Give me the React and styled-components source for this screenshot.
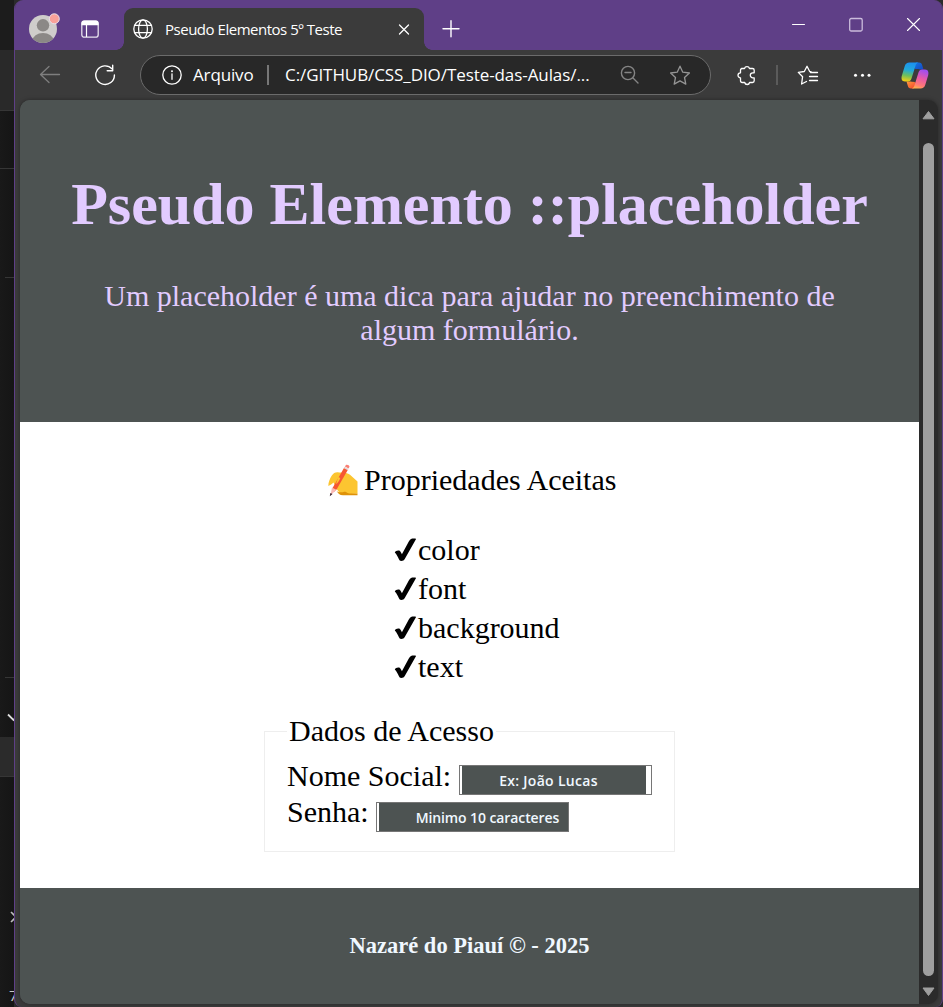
import React from "react";
import styled, { createGlobalStyle } from "styled-components";

const GlobalStyle = createGlobalStyle`
  * { box-sizing: border-box; }
  body { margin: 0; background: #191919; overflow: hidden; }
`;

const Desktop = styled.div`
  display: flex;
  width: 943px;
  height: 1007px;
  background: #2b2b2b;
  overflow: hidden;
`;

const Editor = styled.aside`
  width: 14px;
  flex: none;
  display: flex;
  flex-direction: column;
  background: linear-gradient(90deg, #191919, #151515);
  color: #c8c8c8;
  font: 15px "Open Sans", sans-serif;
  overflow: hidden;
`;

const EditorBlock = styled.div`
  height: ${(p) => p.$h}px;
  flex: none;
  margin-left: ${(p) => p.$inset || 0}px;
  background: ${(p) => p.$bg || "transparent"};
  border-bottom: ${(p) => (p.$line ? "1px solid #363636" : "0")};
  padding-left: ${(p) => p.$pad || 0}px;
  line-height: ${(p) => p.$h}px;
  svg { display: block; }
`;

const Window = styled.div`
  width: 929px;
  flex: none;
  display: flex;
  flex-direction: column;
  background: #3b3b3b;
  border: solid #5f3f87;
  border-width: 0 1px 0 1px;
  border-radius: 9px 9px 8px 8px;
  overflow: hidden;
  font-family: "Open Sans", sans-serif;
`;

const TitleBar = styled.div`
  height: 50px;
  flex: none;
  display: flex;
  background: #5f3f87;
`;

const TitleLeft = styled.div`
  width: 109px;
  display: flex;
  padding: 13px 0 0 13px;
  gap: 21px;
  svg { display: block; flex: none; }
`;

const Tab = styled.div`
  width: 300px;
  height: 42px;
  margin-top: 8px;
  display: flex;
  align-items: center;
  padding: 0 14px 0 9px;
  background: #3b3b3b;
  border-radius: 9px 9px 0 0;
  position: relative;
  &::before, &::after {
    content: "";
    position: absolute;
    bottom: 0;
    width: 8px;
    height: 8px;
  }
  &::before { left: -8px; background: radial-gradient(circle at 0 0, transparent 7.5px, #3b3b3b 8px); }
  &::after { right: -8px; background: radial-gradient(circle at 100% 0, transparent 7.5px, #3b3b3b 8px); }
  svg { display: block; flex: none; }
`;

const TabTitle = styled.span`
  flex: 1;
  margin-left: 12px;
  font-size: 15px;
  line-height: 20px;
  letter-spacing: -0.48px;
  color: #fff;
  white-space: nowrap;
`;

const NewTab = styled.div`
  padding: 20px 0 0 18px;
  flex: 1;
  svg { display: block; }
`;

const WindowControls = styled.div`
  display: flex;
  gap: 43px;
  padding: 17px 21px 0 0;
  svg { display: block; }
`;

const Toolbar = styled.div`
  height: 50px;
  flex: none;
  display: flex;
  align-items: center;
  padding-left: 24px;
  svg { display: block; flex: none; }
`;

const AddressBar = styled.div`
  width: 571px;
  height: 40px;
  margin-left: 24px;
  padding: 0 18px 0 21px;
  display: flex;
  align-items: center;
  background: #282828;
  border: 1px solid #6b6b6b;
  border-radius: 20px;
  color: #fff;
  font-size: 17px;
  line-height: 22px;
  white-space: nowrap;
`;

const Scheme = styled.span`
  width: 60px;
  flex: none;
  margin-left: 11px;
  letter-spacing: -0.15px;
`;

const Url = styled.span`
  width: 304px;
  flex: none;
  margin-left: 16px;
  letter-spacing: -0.08px;
`;

const Divider = styled.span`
  width: 2px;
  flex: none;
  height: 20px;
  margin-left: ${(p) => p.$left}px;
  background: ${(p) => p.$color};
`;

const Gap = styled.span`
  width: ${(p) => p.$w}px;
  flex: none;
`;

const Viewport = styled.div`
  width: 918px;
  height: 904px;
  margin-left: 5px;
  display: flex;
  border-radius: 10px;
  overflow: hidden;
  background: #2b2b2b;
  box-shadow: 0 0 4px rgba(0, 0, 0, 0.35);
`;

const Page = styled.div`
  width: 899px;
  display: flex;
  flex-direction: column;
  background: #4d5352;
  font-family: "Liberation Serif", serif;
  font-size: 30px;
  color: #000;
  white-space: nowrap;
`;

const Header = styled.header`
  height: 322px;
  padding-top: 69px;
  background: #4d5352;
  color: #e2cbff;
  text-align: center;
`;

const Heading = styled.h1`
  margin: 0;
  font-size: 60px;
  line-height: 70px;
`;

const Subtitle = styled.p`
  margin: 40px 0 0;
  line-height: 34px;
`;

const Main = styled.main`
  height: 466px;
  padding-top: 41px;
  background: #fff;
`;

const SectionTitle = styled.p`
  margin: 0 0 33px 307px;
  display: flex;
  line-height: 34px;
  svg { display: block; margin-right: 5px; }
`;

const PropertyList = styled.ul`
  margin: 0 0 28px 374px;
  padding: 0;
  list-style: none;
`;

const Property = styled.li`
  display: flex;
  line-height: 39px;
  svg { display: block; margin: 8px 1px 0 0; }
`;

const AccessForm = styled.fieldset`
  width: 411px;
  height: 138px;
  margin: 0 0 0 244px;
  padding: 0 0 0 22px;
  border: 1px solid #eee;
`;

const Legend = styled.legend`
  height: 34px;
  padding: 0 2px;
  line-height: 34px;
`;

const Field = styled.label`
  display: flex;
  height: 36px;
  line-height: 36px;
  &:first-of-type { margin-top: 10px; }
`;

const FakeInput = styled.span`
  width: 193px;
  height: 30px;
  margin: ${(p) => p.$top}px 0 0 ${(p) => p.$left}px;
  padding: 1px ${(p) => p.$right}px 1px 2px;
  display: block;
  border: 1px solid #767676;
  background: #fff;
`;

const Placeholder = styled.span`
  display: block;
  height: 28px;
  margin: -1px 0;
  padding-left: 37px;
  background: #4d5352;
  color: #f0f8ff;
  font: 600 14px/${(p) => p.$line}px "Open Sans", sans-serif;
  letter-spacing: ${(p) => p.$track}px;
`;

const Footer = styled.footer`
  height: 116px;
  padding-top: 44px;
  background: #4d5352;
  color: #f0f8ff;
  text-align: center;
  font-size: 22.5px;
  font-weight: bold;
  line-height: 28px;
`;

const ScrollTrack = styled.div`
  width: 19px;
  display: flex;
  flex-direction: column;
  justify-content: space-between;
  padding: 10px 0 6px 3px;
  svg { display: block; }
`;

const ScrollThumb = styled.div`
  width: 11px;
  height: 833px;
  margin: 13px 0 0 1px;
  border-radius: 6px;
  background: #9f9f9f;
`;

const Stroke = ({ w, h, color = "#fff", sw = 1.3, children }) => (
  <svg width={w} height={h} viewBox={`0 0 ${w} ${h}`} fill="none" stroke={color} strokeWidth={sw} strokeLinecap="round" strokeLinejoin="round">
    {children}
  </svg>
);

const Avatar = () => (
  <svg width="32" height="32" viewBox="0 0 32 32">
    <clipPath id="face"><circle cx="15" cy="16" r="14" /></clipPath>
    <circle cx="15" cy="16" r="14" fill="#cfcdcb" />
    <g clipPath="url(#face)" fill="#8b8886">
      <circle cx="15" cy="12.3" r="6.2" />
      <ellipse cx="15" cy="27.5" rx="10.5" ry="7.6" />
    </g>
    <circle cx="26.3" cy="5.8" r="5" fill="#f8a199" stroke="#e6dfea" strokeWidth="1" />
  </svg>
);

const Copilot = () => (
  <svg width="28" height="27" viewBox="0 0 28 27">
    <defs>
      <linearGradient id="cpA" x1="0.5" y1="0" x2="0.35" y2="1">
        <stop offset="0" stopColor="#1b90f0" /><stop offset="0.4" stopColor="#22a9d8" />
        <stop offset="0.7" stopColor="#6fbf5c" /><stop offset="1" stopColor="#f5cf12" />
      </linearGradient>
      <linearGradient id="cpB" x1="0.6" y1="0" x2="0.3" y2="1">
        <stop offset="0" stopColor="#a04df0" /><stop offset="0.45" stopColor="#e95aa6" />
        <stop offset="0.8" stopColor="#ff7a76" /><stop offset="1" stopColor="#ffb04c" />
      </linearGradient>
      <linearGradient id="cpC" x1="0" y1="0" x2="1" y2="1">
        <stop offset="0" stopColor="#1476e0" /><stop offset="1" stopColor="#1548c4" />
      </linearGradient>
      <linearGradient id="cpD" x1="0" y1="0" x2="1" y2="1">
        <stop offset="0" stopColor="#ff9c3c" /><stop offset="1" stopColor="#f0402f" />
      </linearGradient>
    </defs>
    <path d="M15 .5h3c2 0 2.700 1 3.200 2.700l1.300 4.300H19c-1.700 0-2.500-.6-4-.3L13 6Z" fill="url(#cpC)" />
    <path d="M13 26.500h-3c-2 0-2.700-1-3.200-2.700L5.500 19.500H9c1.700 0 2.500.6 4 .3L15 21Z" fill="url(#cpD)" />
    <path d="M8.500.5h8.800c-1.500.4-2.200 1.600-2.800 3.300L10.600 16.300c-.8 2.300-1.800 3.200-3.800 3.200H4C.7 19.500 0 16.500.9 13.500L3.700 4.200C4.500 1.700 6 .5 8.500.5Z" fill="url(#cpA)" />
    <path d="M19.500 26.500h-8.800c1.500-.4 2.200-1.600 2.800-3.300l3.900-12.500c.8-2.300 1.800-3.200 3.800-3.200H24c3.300 0 4 3 3.100 6l-2.800 9.300c-.8 2.500-2.300 3.700-4.800 3.700Z" fill="url(#cpB)" />
  </svg>
);

const WritingHand = () => (
  <svg width="32" height="34" viewBox="0 0 32 34">
    <path d="M12 9.500c-3-.8-5.500.5-7.200 3C2.700 15.800 1.300 19.500 1.300 23c2-.8 3.800-2 5.200-3.500L9 25l4 5.500 5 1 12.500-1V18.500l-7.500-6.700c-2.200-1.600-6-2.500-11-2.300Z" fill="#fcc531" />
    <path d="M9.500 27.500c1.500 2.300 3.500 1.700 5.500 1.800 1.500 0 2.500-1.200 4-.3 1.500 1.100 3 1.500 5 1.500h6.500v1.800H17c-4 .4-6-1.400-7.500-4.800Z" fill="#df9208" />
    <path d="m17.400 4.200 3.800 2.100L9.700 26.300l-3 3L5 26Z" fill="#f65632" />
    <path d="m17.900 3.600 1-1.700c1.500-.7 3.400.4 3.600 1.800l-1 1.900Z" fill="#fa8075" />
    <path d="m16.900 5.200 3.900 2.100.7-1.500-3.900-2.100Z" fill="#e4dcdc" />
    <path d="m5 24.500 4.300 2.200-5.900 5.800Z" fill="#f9b9b4" />
    <path d="m3.400 30 2.100.9-2.700 2.400Z" fill="#3b2530" />
    <path d="M13.300 15c-1.200 2.900-2.200 4.600-4.300 6l2.300-7Z" fill="#fcc531" />
  </svg>
);

const Check = () => (
  <svg width="23" height="26" viewBox="0 0 23 26">
    <path d="M.8 14.500c.4-1.600 2.900-2.500 4.400-1.900 1.100.5 2 2.100 2.700 3.700L14.800 3.500C16.200 1 17.500.5 20 .5c1.800 0 2.400.1 1.800 1L10.900 20.700c-.8 1.500-2 2.200-3.600 2.200-1.400 0-1.900-.5-2.500-1.800C3.700 18.500 2.800 16.700.8 14.500Z" fill="#000" />
  </svg>
);

const properties = ["color", "font", "background", "text"];

export default function App() {
  return (
    <Desktop>
      <GlobalStyle />
      <Editor>
        <EditorBlock $h={50} $bg="#1c1c1c" />
        <EditorBlock $h={61} $bg="#292929" $line />
        <EditorBlock $h={58} $line />
        <EditorBlock $h={109} $line $inset={5} />
        <EditorBlock $h={400} $line $inset={5} />
        <EditorBlock $h={59} $pad={7}>
          <svg width="12" height="48" viewBox="0 0 12 48" fill="none" stroke="#ddd" strokeWidth="1.8"><path d="m1 36.500 5.500 5.500 5-5" /></svg>
        </EditorBlock>
        <EditorBlock $h={40} $bg="#2b2b2b" $line />
        <EditorBlock $h={125} />
        <EditorBlock $h={78} $pad={10}>
          <svg width="12" height="24" viewBox="0 0 12 24" fill="none" stroke="#bbb" strokeWidth="1.6"><path d="m1 10 5 5-5 5" /></svg>
        </EditorBlock>
        <EditorBlock $h={30} $pad={9}>7</EditorBlock>
      </Editor>
      <Window>
        <TitleBar>
          <TitleLeft>
            <Avatar />
            <svg width="18" height="32" viewBox="0 0 18 32" fill="none">
              <rect x="0.800" y="8.200" width="16.400" height="16" rx="2.500" stroke="#fff" strokeOpacity=".85" strokeWidth="1.300" />
              <path d="M.5 12V10A2.500 2.500 0 0 1 3 7.600h12a2.500 2.500 0 0 1 2.500 2.400v2.300H.5Z" fill="#fff" />
              <path d="M5.500 12v12" stroke="#fff" strokeWidth="1.200" />
            </svg>
          </TitleLeft>
          <Tab>
            <Stroke w={20} h={20}>
              <circle cx="10" cy="10" r="9.200" />
              <ellipse cx="10" cy="10" rx="4.400" ry="9.200" />
              <path d="M1.800 6.300h16.400M1.800 13.700h16.400" />
            </Stroke>
            <TabTitle>Pseudo Elementos 5º Teste</TabTitle>
            <Stroke w={12} h={12}><path d="m1.500 2 9 9M10.500 2l-9 9" /></Stroke>
          </Tab>
          <NewTab>
            <Stroke w={18} h={18} sw={1.400}><path d="M9 .7v16M1 8.700h16" /></Stroke>
          </NewTab>
          <WindowControls>
            <Stroke w={14} h={15} sw={1}><path d="M1.500 7.500h12" /></Stroke>
            <Stroke w={15} h={15} color="#cbbcdc"><rect x="1.700" y="1.500" width="12.500" height="12.500" rx="1.500" /></Stroke>
            <Stroke w={15} h={15} sw={1.100}><path d="m1.500 1.500 12 12M13.500 1.500l-12 12" /></Stroke>
          </WindowControls>
        </TitleBar>
        <Toolbar>
          <Stroke w={22} h={20} color="#7e7e7e"><path d="M1.500 9.500h19M10 1.500l-8.500 8 8.500 8" /></Stroke>
          <Gap $w={33} />
          <Stroke w={22} h={22} sw={1.400}>
            <path d="M18 4.900a9.300 9.300 0 1 0 2.400 6.100M18.700 1.300v5.500h-5.500" />
          </Stroke>
          <AddressBar>
            <Stroke w={20} h={20}><circle cx="10" cy="10" r="9.200" /><path d="M10 8.800v5.500" /><circle cx="10" cy="6.200" r=".4" /></Stroke>
            <Scheme>Arquivo</Scheme>
            <Divider $left={14} $color="#777" />
            <Url>C:/GITHUB/CSS_DIO/Teste-das-Aulas/...</Url>
            <Gap $w={31} />
            <Stroke w={19} h={20} color="#858585" sw={1.400}><circle cx="8" cy="8" r="6.600" /><path d="M5 7.500h6M13 13l5 5" /></Stroke>
            <Gap $w={30} />
            <Stroke w={22} h={22} color="#959595"><path d="m11 2.200 2.800 6 6.600.8-4.900 4.500 1.300 6.600-5.800-3.200-5.800 3.200 1.300-6.600L1.600 9l6.600-.8Z" /></Stroke>
          </AddressBar>
          <Gap $w={25} />
          <Stroke w={22} h={22}>
            <path d="M5.500 4.500h3a2.600 2.600 0 0 1 5 0h3q1.700 0 1.700 1.700v2.600h-1.400a2.500 2.500 0 0 0 0 5h1.400v3q0 1.700-1.700 1.700h-2.900a2.500 2.500 0 0 1-4.900 0H6.200q-1.700 0-1.700-1.700v-3a2.500 2.500 0 0 1 0-5V6.200q0-1.700 1.700-1.700" />
          </Stroke>
          <Divider $left={18} $color="#5b5b5b" />
          <Gap $w={19} />
          <Stroke w={22} h={22}>
            <path d="M14 7.700 12.700 7.500 10 2.300 7.300 7.500l-6 .9 4.300 4.300-1 7.300L9.500 17.500M13.500 8.500h7M12.500 12.500h8M12.500 16.500h8" />
          </Stroke>
          <Gap $w={34} />
          <svg width="18" height="6" viewBox="0 0 18 6" fill="#fff"><circle cx="2.500" cy="3.200" r="1.500" /><circle cx="9.500" cy="3.200" r="1.500" /><circle cx="16" cy="3.200" r="1.500" /></svg>
          <Gap $w={30} />
          <Copilot />
        </Toolbar>
        <Viewport>
          <Page>
            <Header>
              <Heading>Pseudo Elemento ::placeholder</Heading>
              <Subtitle>
                Um placeholder é uma dica para ajudar no preenchimento de
                <br />
                algum formulário.
              </Subtitle>
            </Header>
            <Main>
              <SectionTitle><WritingHand />Propriedades Aceitas</SectionTitle>
              <PropertyList>
                {properties.map((name) => (
                  <Property key={name}><Check />{name}</Property>
                ))}
              </PropertyList>
              <AccessForm>
                <Legend>Dados de Acesso</Legend>
                <Field>
                  Nome Social:
                  <FakeInput $top={7} $left={8} $right={5}><Placeholder $track={0.3} $line={30}>Ex: João Lucas</Placeholder></FakeInput>
                </Field>
                <Field>
                  Senha:
                  <FakeInput $top={8} $left={7} $right={0}><Placeholder $track={-0.1} $line={29}>Minimo 10 caracteres</Placeholder></FakeInput>
                </Field>
              </AccessForm>
            </Main>
            <Footer>Nazaré do Piauí © - 2025</Footer>
          </Page>
          <ScrollTrack>
            <svg width="13" height="10" viewBox="0 0 13 10"><path d="M6.500 1.500 12 8.800H1Z" fill="#9f9f9f" stroke="#9f9f9f" strokeLinejoin="round" /></svg>
            <ScrollThumb />
            <svg width="13" height="12" viewBox="0 0 13 12"><path d="M6.500 9.500 12 2H1Z" fill="#9f9f9f" stroke="#9f9f9f" strokeLinejoin="round" /></svg>
          </ScrollTrack>
        </Viewport>
      </Window>
    </Desktop>
  );
}
